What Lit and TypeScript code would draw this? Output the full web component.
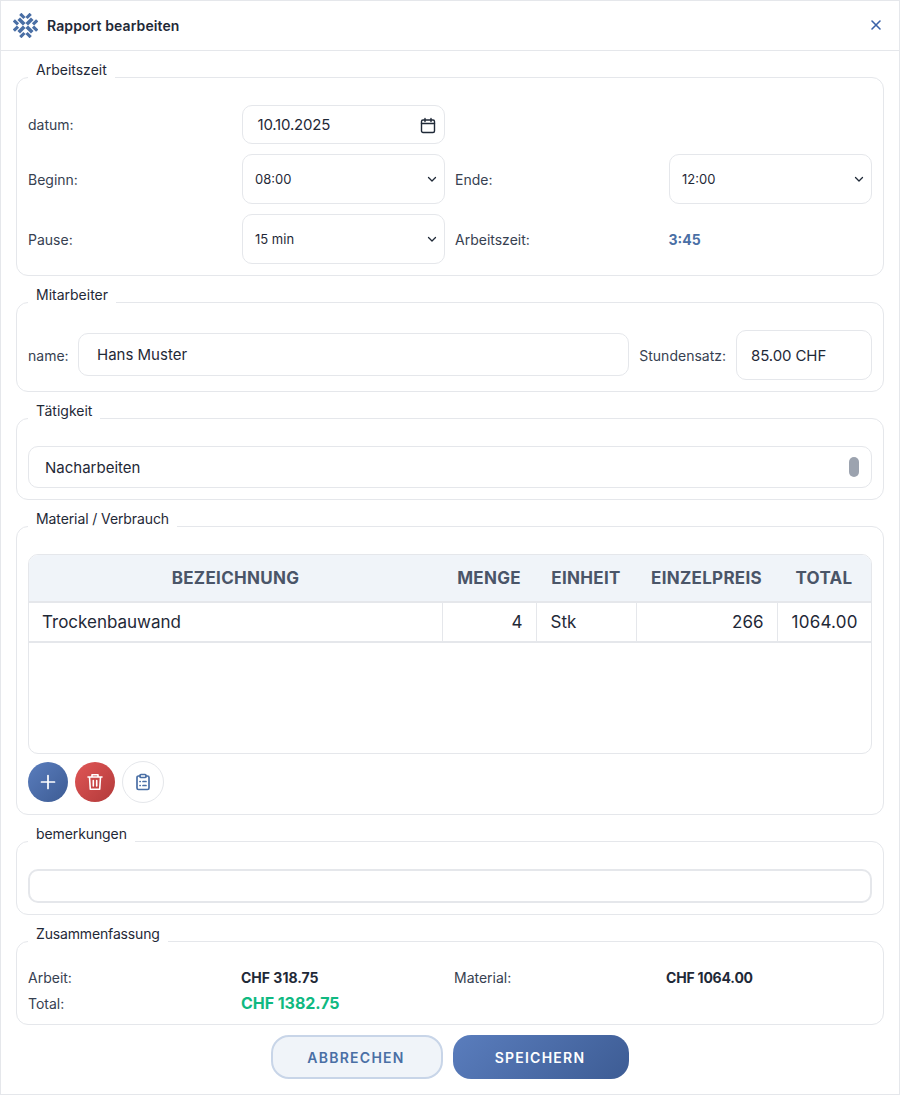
import { LitElement, html, css } from "lit";
import { customElement } from "lit/decorators.js";

@customElement("app-root")
export class AppRoot extends LitElement {
  static styles = css`
    :host { display: block; font-family: Inter, "Noto Sans", sans-serif; color: #1f2937; }
    * { box-sizing: border-box; }
    .page { width: 900px; height: 1095px; background: #fff; border: 1px solid #e5e7eb; display: flex; flex-direction: column; }
    .head { height: 50px; flex: none; border-bottom: 1px solid #e5e7eb; display: flex; align-items: center; padding: 0 15px 0 12px; gap: 9px; }
    .head h1 { margin: 0; font-size: 14px; font-weight: 600; flex: 1; color: #1f2937; letter-spacing: 0.1px; }
    .close { width: 16px; height: 16px; color: #3a62a8; display: block; margin-top: -1px; }
    .body { padding: 10px 15px 0; display: flex; flex-direction: column; gap: 10px; }
    fieldset { margin: 0; min-width: 0; border: 1px solid #e5e7eb; border-radius: 12px; padding: 11px; }
    legend { font-size: 14px; line-height: 17px; padding: 0 8px; color: #1f2937; height: 33px; }
    legend.tight { letter-spacing: -0.1px; }
    legend.tighter { letter-spacing: -0.15px; }
    .grid { display: grid; grid-template-columns: repeat(4, 1fr); column-gap: 10px; align-items: center; }
    .time { row-gap: 10px; }
    .lab { font-size: 14px; color: #374151; }
    .field { border: 1px solid #e5e7eb; border-radius: 10px; background: #fff; display: flex; align-items: center; font-size: 14px; color: #1f2937; }
    .date { height: 39px; padding: 0 8px 0 15px; justify-content: space-between; font-size: 15px; letter-spacing: -0.2px; }
    .sel { height: 50px; padding: 0 12px 0 12.5px; justify-content: space-between; font-size: 13px; }
    .sel svg { width: 12px; height: 12px; margin-right: -6px; }
    .dur { font-size: 14px; font-weight: 700; color: #4a6fa5; }
    .emp { display: flex; align-items: flex-start; gap: 10px; height: 50px; }
    .emp .lab { align-self: center; }
    .namelab { width: 40px; }
    .emp .n { flex: 1; height: 43px; margin-top: 3px; padding: 0 18px; font-size: 15px; }
    .emp .r { width: 136px; height: 50px; padding: 0 14px; font-size: 15px; letter-spacing: -0.1px; }
    .task { height: 42px; padding: 0 16px; font-size: 15px; position: relative; }
    .thumb { position: absolute; left: 820px; top: 10px; width: 10px; height: 20px; border-radius: 5px; background: #9ca3af; }
    .tablewrap { height: 200px; border: 1px solid #e5e7eb; border-radius: 10px; overflow: hidden; }
    table { border-collapse: collapse; width: 842px; table-layout: fixed; }
    th { height: 47px; background: #f0f4f9; font-size: 17px; font-weight: 700; letter-spacing: 0.3px; color: #4a5568; border-bottom: 2px solid #e5e7eb; padding: 0; text-align: center; }
    td { height: 40px; font-size: 17px; color: #1f2937; border-bottom: 2px solid #e5e7eb; border-left: 1px solid #e5e7eb; padding: 0 13px 0 14px; }
    td:first-child { border-left: none; padding-left: 13px; }
    td:last-child { border-right: 1px solid #e5e7eb; letter-spacing: 0.25px; }
    td.right { text-align: right; }
    .tools { display: flex; align-items: center; gap: 7px; padding-top: 7px; }
    .circle { width: 40px; height: 40px; border-radius: 50%; display: flex; align-items: center; justify-content: center; border: none; padding: 0; }
    .add { background: linear-gradient(135deg, #5a7dbd, #3d5c94); color: #fff; }
    .del { background: linear-gradient(135deg, #e05656, #b23a3a); color: #fff; }
    .clip { width: 42px; height: 42px; background: #fff; border: 1px solid #e5e7eb; color: #4a6fa5; }
    .note { height: 34px; border: 2px solid #e5e7eb; border-radius: 10px; }
    .sum { row-gap: 7px; column-gap: 8px; }
    .sum > div { font-size: 14px; }
    .sum > .r1 { line-height: 18px; }
    .sum > .r2 { line-height: 19px; }
    .val { font-weight: 700; color: #1f2937; }
    .sum > .mat { letter-spacing: -0.2px; margin-left: -1px; }
    .sum > .green { font-size: 16px; font-weight: 700; color: #10b981; letter-spacing: -0.05px; }
    .foot { display: flex; justify-content: center; gap: 10px; padding-top: 10px; }
    .btn { height: 44px; border-radius: 18px; font: 600 14px Inter, sans-serif; letter-spacing: 1.25px; display: flex; align-items: center; justify-content: center; padding-right: 2px; }
    .cancel { width: 172px; background: #f0f4f9; border: 2px solid #c8d5e8; color: #4a6fa5; }
    .save { width: 176px; background: linear-gradient(135deg, #5a7dbd, #3d5c94); border: none; color: #fff; }
  `;

  render() {
    const chev = html`<svg viewBox="0 0 12 12" fill="none" stroke="#1f2937" stroke-width="1.3" stroke-linecap="round" stroke-linejoin="round"><path d="M2.5 4.500 6 8l3.500-3.500"/></svg>`;
    return html`
      <div class="page">
        <div class="head">
          <svg width="25" height="25" viewBox="0 0 24 24" fill="none" stroke="#4a6fa5" stroke-width="3.500">
            <path d="M5.500 5.500 10.800 10.800M18.500 5.500 13.200 10.800M5.500 18.500 10.800 13.200M18.500 18.500 13.200 13.200"/>
            <path d="M7 0.800 11 4.800M17 0.800 13 4.800M7 23.200 11 19.200M17 23.200 13 19.200" stroke-width="3"/>
            <path d="M0.800 7 4.800 11M0.800 17 4.800 13M23.200 7 19.200 11M23.200 17 19.200 13" stroke-width="3"/>
          </svg>
          <h1>Rapport bearbeiten</h1>
          <svg class="close" viewBox="0 0 16 16" fill="none" stroke="currentColor" stroke-width="1.6" stroke-linecap="round"><path d="M4 4l8 8M12 4l-8 8"/></svg>
        </div>
        <div class="body">
          <fieldset>
            <legend>Arbeitszeit</legend>
            <div class="grid time">
              <div class="lab">datum:</div>
              <div class="field date"><span>10.10.2025</span>
                <svg width="16" height="18" viewBox="0 0 16 18" fill="none" stroke="#1f2937" stroke-width="1.400" stroke-linecap="round"><rect x="1.500" y="4" width="13" height="12.500" rx="1.500"/><path d="M1.500 7.500h13M5 2.500v3M11 2.500v3"/></svg>
              </div>
              <div></div><div></div>
              <div class="lab">Beginn:</div>
              <div class="field sel"><span>08:00</span>${chev}</div>
              <div class="lab">Ende:</div>
              <div class="field sel"><span>12:00</span>${chev}</div>
              <div class="lab">Pause:</div>
              <div class="field sel"><span>15 min</span>${chev}</div>
              <div class="lab">Arbeitszeit:</div>
              <div class="dur">3:45</div>
            </div>
          </fieldset>
          <fieldset>
            <legend>Mitarbeiter</legend>
            <div class="emp">
              <div class="lab namelab">name:</div>
              <div class="field n">Hans Muster</div>
              <div class="lab">Stundensatz:</div>
              <div class="field r">85.00 CHF</div>
            </div>
          </fieldset>
          <fieldset>
            <legend>Tätigkeit</legend>
            <div class="field task">Nacharbeiten<div class="thumb"></div></div>
          </fieldset>
          <fieldset>
            <legend class="tight">Material / Verbrauch</legend>
            <div class="tablewrap">
              <table>
                <colgroup><col style="width:413px"/><col style="width:94px"/><col style="width:100px"/><col style="width:141px"/><col style="width:94px"/></colgroup>
                <thead><tr><th>BEZEICHNUNG</th><th>MENGE</th><th>EINHEIT</th><th>EINZELPREIS</th><th>TOTAL</th></tr></thead>
                <tbody><tr><td>Trockenbauwand</td><td class="right">4</td><td>Stk</td><td class="right">266</td><td class="right">1064.00</td></tr></tbody>
              </table>
            </div>
            <div class="tools">
              <button class="circle add"><svg width="18" height="18" viewBox="0 0 18 18" fill="none" stroke="currentColor" stroke-width="1.700" stroke-linecap="round"><path d="M9 2.500v13M2.500 9h13"/></svg></button>
              <button class="circle del"><svg width="20" height="20" viewBox="0 0 20 20" fill="none" stroke="currentColor" stroke-width="1.600" stroke-linecap="round" stroke-linejoin="round"><path d="M3 5h14M7 5V2.800h6V5M4.500 5l.8 12.200h9.400L15.500 5M8.300 8.500v5.500M11.700 8.500v5.500"/></svg></button>
              <button class="circle clip"><svg width="20" height="20" viewBox="0 0 20 20" fill="none" stroke="currentColor" stroke-width="1.700" stroke-linecap="round" stroke-linejoin="round"><path d="M7 4H5.500A1.500 1.500 0 0 0 4 5.500v10.500A1.500 1.500 0 0 0 5.500 17.500h9a1.500 1.500 0 0 0 1.500-1.500V5.500A1.500 1.500 0 0 0 14.500 4H13"/><rect x="7" y="2.500" width="6" height="3" rx="1"/><path d="M7 9.500h.2M10 9.500h3M7 13.500h.2M10 13.500h3"/></svg></button>
            </div>
          </fieldset>
          <fieldset>
            <legend class="tight">bemerkungen</legend>
            <div class="note"></div>
          </fieldset>
          <fieldset>
            <legend class="tighter">Zusammenfassung</legend>
            <div class="grid sum">
              <div class="lab r1">Arbeit:</div><div class="val r1">CHF 318.75</div>
              <div class="lab r1">Material:</div><div class="val r1 mat">CHF 1064.00</div>
              <div class="lab r2">Total:</div><div class="green r2">CHF 1382.75</div>
            </div>
          </fieldset>
        </div>
        <div class="foot">
          <div class="btn cancel">ABBRECHEN</div>
          <div class="btn save">SPEICHERN</div>
        </div>
      </div>
    `;
  }
}
